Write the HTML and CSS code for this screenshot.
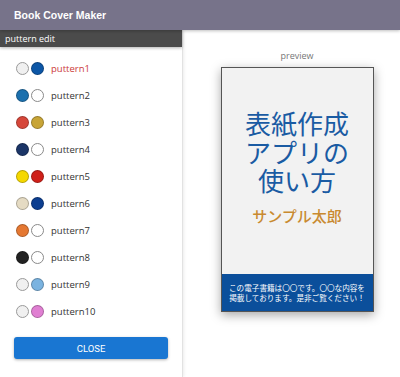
FILE: index.html
```html
<!DOCTYPE html>
<html lang="ja">
<head>
    <meta http-equiv="Content-Type" content="text/html; charset=UTF-8">
    <meta name="viewport" content="width=device-width, initial-scale=1.0">
    <title>Book Cover Maker</title>
    <link rel="stylesheet" href="styles.css">
</head>
<body>
    <div class="header">Book Cover Maker</div>
    <div class="main">
        <div class="sidebar">
            <div class="side-title">puttern edit</div>
            <ul class="puttern-list">
                <li class="puttern active"><span class="dot c-light"></span><span class="dot c-blue"></span>puttern1</li>
                <li class="puttern"><span class="dot c-sky"></span><span class="dot c-white"></span>puttern2</li>
                <li class="puttern"><span class="dot c-red"></span><span class="dot c-gold"></span>puttern3</li>
                <li class="puttern"><span class="dot c-navy"></span><span class="dot c-white"></span>puttern4</li>
                <li class="puttern"><span class="dot c-yellow"></span><span class="dot c-crimson"></span>puttern5</li>
                <li class="puttern"><span class="dot c-beige"></span><span class="dot c-royal"></span>puttern6</li>
                <li class="puttern"><span class="dot c-orange"></span><span class="dot c-white"></span>puttern7</li>
                <li class="puttern"><span class="dot c-black"></span><span class="dot c-white"></span>puttern8</li>
                <li class="puttern"><span class="dot c-light"></span><span class="dot c-lightblue"></span>puttern9</li>
                <li class="puttern"><span class="dot c-light"></span><span class="dot c-pink"></span>puttern10</li>
            </ul>
            <button class="close-btn">CLOSE</button>
        </div>
        <div class="preview">
            <div class="preview-label">preview</div>
            <div class="cover">
                <div class="cover-body">
                    <div class="cover-title">
                        <div class="title-line">表紙作成</div>
                        <div class="title-line">アプリの</div>
                        <div class="title-line">使い方</div>
                    </div>
                    <div class="cover-author">サンプル太郎</div>
                </div>
                <div class="cover-foot">この電子書籍は〇〇です。〇〇な内容を<br>掲載しております。是非ご覧ください！</div>
            </div>
        </div>
    </div>
</body>
</html>
```

FILE: styles.css
```css
body {
    margin: 0;
    font-family: "Open Sans", "Noto Sans", sans-serif;
    background-color: #ffffff;
}

.header {
    height: 30px;
    line-height: 30px;
    padding-left: 14px;
    background-color: #77738a;
    color: #ffffff;
    font-family: "Liberation Sans", sans-serif;
    font-weight: bold;
    font-size: 10.5px;
    box-shadow: 0 1px 3px rgba(0, 0, 0, 0.25);
    position: relative;
    z-index: 2;
}

.main {
    display: flex;
    height: 347px;
}

.sidebar {
    width: 182px;
    border-right: 1px solid #e2e2e2;
    box-shadow: 1px 0 3px rgba(0, 0, 0, 0.08);
}

.side-title {
    height: 17px;
    line-height: 17px;
    padding-left: 5px;
    background-color: #4b4b4b;
    color: #ffffff;
    font-size: 9px;
    box-shadow: 0 1px 3px rgba(0, 0, 0, 0.3);
}

.puttern-list {
    list-style: none;
    margin: 0;
    padding: 8px 0 0 0;
}

.puttern {
    display: flex;
    align-items: center;
    height: 27px;
    padding-left: 16px;
    font-size: 9.5px;
    color: #333333;
}

.puttern.active {
    color: #cc3a3a;
}

.dot {
    width: 11px;
    height: 11px;
    border-radius: 50%;
    border: 1px solid rgba(0, 0, 0, 0.25);
    margin-right: 2px;
}

.dot + .dot {
    margin-right: 7px;
}

.c-light { background-color: #f0f0f0; border-color: #9a9a9a; }
.c-white { background-color: #ffffff; border-color: #8a8a8a; }
.c-blue { background-color: #0c56a6; }
.c-sky { background-color: #1b70ae; }
.c-red { background-color: #d6473a; }
.c-gold { background-color: #c8a537; }
.c-navy { background-color: #1b3567; }
.c-yellow { background-color: #f5d800; }
.c-crimson { background-color: #cf2019; }
.c-beige { background-color: #e5dbc3; }
.c-royal { background-color: #0c3e90; }
.c-orange { background-color: #e57832; }
.c-black { background-color: #222222; }
.c-lightblue { background-color: #7ab3e0; }
.c-pink { background-color: #e07fd2; }

.close-btn {
    display: block;
    width: 154px;
    height: 22px;
    margin: 12px 0 0 14px;
    border: none;
    border-radius: 3px;
    background-color: #1976d2;
    color: #ffffff;
    font-family: Roboto, sans-serif;
    font-size: 9.5px;
    box-shadow: 0 1px 3px rgba(0, 0, 0, 0.3);
}

.preview {
    flex: 1;
    display: flex;
    flex-direction: column;
    align-items: center;
    padding-left: 11px;
}

.preview-label {
    margin-top: 19px;
    height: 14px;
    line-height: 14px;
    font-size: 9px;
    color: #777777;
}

.cover {
    width: 151px;
    height: 243px;
    margin-top: 4px;
    border: 1px solid #555555;
    background-color: #f2f2f2;
    display: flex;
    flex-direction: column;
    box-shadow: 0 3px 10px rgba(0, 0, 0, 0.35);
    font-family: "Noto Sans CJK JP", sans-serif;
}

.cover-body {
    flex: 1;
    text-align: center;
}

.cover-title {
    margin-top: 41px;
    color: #1a5ba3;
}

.title-line {
    height: 28.5px;
    line-height: 28.5px;
    font-size: 26px;
}

.cover-author {
    margin-top: 10px;
    font-size: 15px;
    font-weight: 500;
    color: #c98a30;
}

.cover-foot {
    height: 37px;
    display: flex;
    align-items: center;
    justify-content: center;
    text-align: center;
    background-color: #0b4f9b;
    color: #ffffff;
    font-size: 7.6px;
    line-height: 10px;
}
```
